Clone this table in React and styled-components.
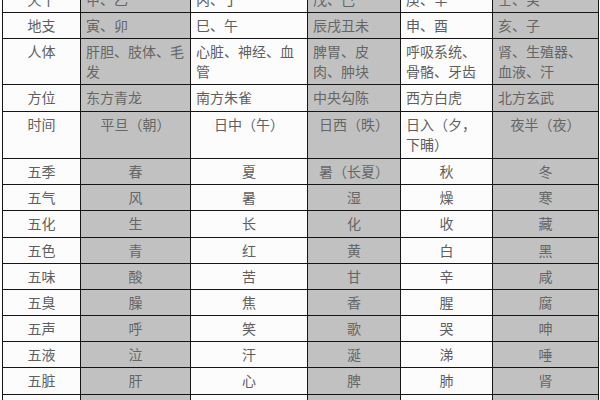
import React from 'react';
import styled, { createGlobalStyle } from 'styled-components';

const GlobalStyle = createGlobalStyle`
  html, body {
    margin: 0;
    padding: 0;
    background: #fff;
    overflow: hidden;
  }
  body {
    font-family: "Noto Sans CJK SC", "Noto Sans", sans-serif;
  }
`;

const Page = styled.div`
  width: 600px;
  height: 400px;
  overflow: hidden;
  padding-left: 2px;
  box-sizing: border-box;
`;

const Table = styled.table`
  margin-top: -14px;
  width: 596px;
  table-layout: fixed;
  border-collapse: collapse;
  font-size: 14px;
  line-height: 20px;
`;

const Row = styled.tr`
  height: ${props => props.$h}px;
`;

const Cell = styled.td`
  border: 1px solid #151515;
  padding: 2px 5px 3px;
  vertical-align: top;
  text-align: ${props => props.$align};
  background: ${props => props.$shade ? '#c1c1c1' : '#fcfcfc'};
  color: ${props => props.$shade ? '#666' : '#5f5f5f'};
  white-space: nowrap;
  overflow: hidden;
`;

const widths = [78, 110, 117, 93, 92, 106];

const rows = [
  { h: 26, left: true, cells: ['天干', '甲、乙', '丙、丁', '戊、己', '庚、辛', '壬、癸'] },
  { h: 25, left: true, cells: ['地支', '寅、卯', '巳、午', '辰戌丑未', '申、酉', '亥、子'] },
  { h: 46, left: true, cells: ['人体', ['肝胆、肢体、毛', '发'], ['心脏、神经、血', '管'], ['脾胃、皮', '肉、肿块'], ['呼吸系统、', '骨骼、牙齿'], ['肾、生殖器、', '血液、汗']] },
  { h: 27, left: true, cells: ['方位', '东方青龙', '南方朱雀', '中央勾陈', '西方白虎', '北方玄武'] },
  { h: 47, leftCol: 4, cells: ['时间', '平旦（朝）', '日中（午）', '日西（昳）', ['日入（夕，', '下晡）'], '夜半（夜）'] },
  { h: 26, cells: ['五季', '春', '夏', '暑（长夏）', '秋', '冬'] },
  { h: 26, cells: ['五气', '风', '暑', '湿', '燥', '寒'] },
  { h: 27, cells: ['五化', '生', '长', '化', '收', '藏'] },
  { h: 26, cells: ['五色', '青', '红', '黄', '白', '黑'] },
  { h: 25, cells: ['五味', '酸', '苦', '甘', '辛', '咸'] },
  { h: 26, cells: ['五臭', '臊', '焦', '香', '腥', '腐'] },
  { h: 26, cells: ['五声', '呼', '笑', '歌', '哭', '呻'] },
  { h: 26, cells: ['五液', '泣', '汗', '涎', '涕', '唾'] },
  { h: 27, cells: ['五脏', '肝', '心', '脾', '肺', '肾'] },
  { h: 26, cells: ['五窍', '目', '舌', '口', '鼻', '耳'] },
];

function CellText({ value }) {
  if (Array.isArray(value)) {
    return value.map((line, i) => (
      <React.Fragment key={i}>
        {i > 0 && <br />}
        {line}
      </React.Fragment>
    ));
  }
  return value;
}

// first column is always centred; top rows are left-aligned
const alignFor = (row, c) => {
  if (c === 0) return 'center';
  if (row.left || row.leftCol === c) return 'left';
  return 'center';
};

export default function App() {
  return (
    <Page>
      <GlobalStyle />
      <Table>
        <colgroup>
          {widths.map((w, i) => <col key={i} style={{ width: w }} />)}
        </colgroup>
        <tbody>
          {rows.map((row, r) => (
            <Row key={r} $h={row.h}>
              {row.cells.map((value, c) => (
                <Cell key={c} $shade={c % 2 === 1} $align={alignFor(row, c)}>
                  <CellText value={value} />
                </Cell>
              ))}
            </Row>
          ))}
        </tbody>
      </Table>
    </Page>
  );
}
